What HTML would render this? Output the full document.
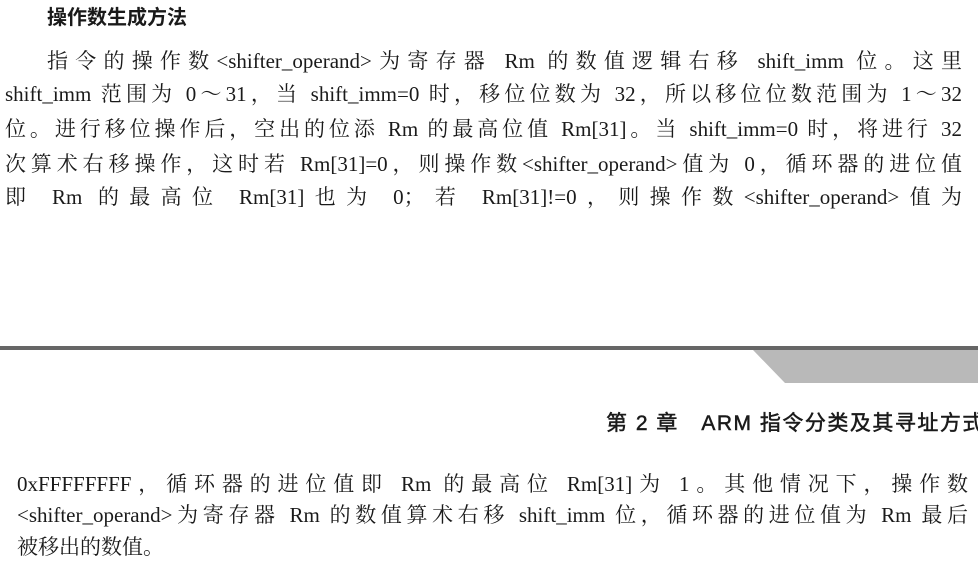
<!DOCTYPE html>
<html><head><meta charset="utf-8"><style>
body{margin:0;width:978px;height:575px;background:#fff;position:relative;overflow:hidden;color:#1a1a1a}
.l{position:absolute;font-family:"Liberation Serif","Noto Serif CJK SC",serif;font-size:21px;line-height:24px;white-space:nowrap;text-align:justify;text-align-last:justify;overflow:visible}
.h{position:absolute;font-family:"Liberation Sans","Noto Sans CJK SC",sans-serif;font-weight:bold;white-space:nowrap}
</style></head><body>
<div class="h" style="left:47px;top:5px;font-size:20px;line-height:26px">操作数生成方法</div>
<div class="l" style="left:47px;top:49px;width:915px">指令的操作数&lt;shifter_operand&gt;为寄存器 Rm 的数值逻辑右移 shift_imm 位。这里</div>
<div class="l" style="left:5px;top:82px;width:957px">shift_imm 范围为 0～31，当 shift_imm=0 时，移位位数为 32，所以移位位数范围为 1～32</div>
<div class="l" style="left:5px;top:117px;width:957px">位。进行移位操作后，空出的位添 Rm 的最高位值 Rm[31]。当 shift_imm=0 时，将进行 32</div>
<div class="l" style="left:5px;top:152px;width:957px">次算术右移操作，这时若 Rm[31]=0，则操作数&lt;shifter_operand&gt;值为 0，循环器的进位值</div>
<div class="l" style="left:5px;top:185px;width:957px">即 Rm 的最高位 Rm[31]也为 0；若 Rm[31]!=0，则操作数&lt;shifter_operand&gt;值为</div>
<div style="position:absolute;left:0;top:346px;width:978px;height:4px;background:#666"></div>
<svg style="position:absolute;left:0;top:350px" width="978" height="34"><polygon points="753,0 978,0 978,33 785,33" fill="#b9b9b9"/></svg>
<div class="h" style="left:606px;top:410px;font-size:21px;line-height:28px;font-weight:normal;letter-spacing:1.5px;-webkit-text-stroke:0.5px #1a1a1a">第 2 章　ARM 指令分类及其寻址方式</div>
<div class="l" style="left:17px;top:472px;width:951px">0xFFFFFFFF，循环器的进位值即 Rm 的最高位 Rm[31]为 1。其他情况下，操作数</div>
<div class="l" style="left:17px;top:503px;width:951px">&lt;shifter_operand&gt;为寄存器 Rm 的数值算术右移 shift_imm 位，循环器的进位值为 Rm 最后</div>
<div class="l" style="left:17px;top:535px;text-align-last:auto">被移出的数值。</div>
</body></html>
